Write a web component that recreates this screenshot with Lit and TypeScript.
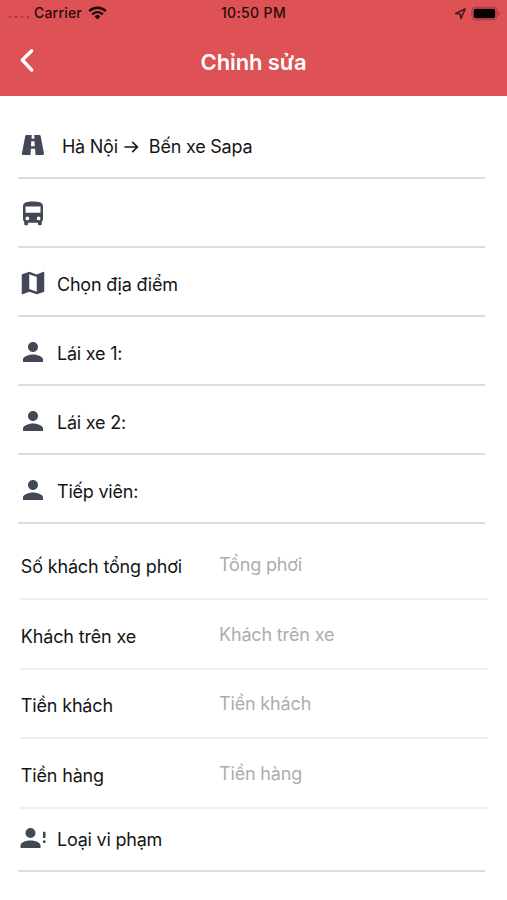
import { LitElement, html, css, svg } from "lit";
import { customElement } from "lit/decorators.js";

const icons: Record<string, unknown> = {
  road: svg`<path d="M18.1,4.8C18,4.3 17.6,4 17.1,4H13L13.2,7H10.8L11,4H6.8C6.3,4 5.9,4.4 5.8,4.8L3.1,18.8C3,19.4 3.5,20 4.1,20H10L10.3,15H13.7L14,20H19.8C20.4,20 20.9,19.4 20.8,18.8L18.1,4.8M10.4,13L10.6,9H13.2L13.4,13H10.4Z"/>`,
  bus: svg`<path d="M4 16c0 .88.39 1.67 1 2.22V20c0 .55.45 1 1 1h1c.55 0 1-.45 1-1v-1h8v1c0 .55.45 1 1 1h1c.55 0 1-.45 1-1v-1.78c.61-.55 1-1.34 1-2.22V6c0-3.5-3.58-4-8-4s-8 .5-8 4v10zm3.5 1c-.83 0-1.5-.67-1.5-1.5S6.67 14 7.5 14s1.5.67 1.5 1.5S8.33 17 7.5 17zm9 0c-.83 0-1.5-.67-1.5-1.5s.67-1.5 1.5-1.5 1.5.67 1.5 1.5-.67 1.5-1.5 1.5zm1.5-6H6V6h12v5z"/>`,
  map: svg`<path d="M20.5 3l-.16.03L15 5.1 9 3 3.36 4.9c-.21.07-.36.25-.36.48V20.5c0 .28.22.5.5.5l.16-.03L9 18.9l6 2.1 5.64-1.9c.21-.07.36-.25.36-.48V3.5c0-.28-.22-.5-.5-.5zM15 19l-6-2.11V5l6 2.11V19z"/>`,
  person: svg`<path d="M12 12c2.21 0 4-1.79 4-4s-1.79-4-4-4-4 1.79-4 4 1.79 4 4 4zm0 2c-2.67 0-8 1.34-8 4v2h16v-2c0-2.66-5.33-4-8-4z"/>`,
  alert: svg`<path d="M10,4A4,4 0 0,1 14,8A4,4 0 0,1 10,12A4,4 0 0,1 6,8A4,4 0 0,1 10,4M10,14C14.42,14 18,15.79 18,18V20H2V18C2,15.79 5.58,14 10,14M20,12V7H22V12H20M20,16V14H22V16H20Z"/>`,
};

@customElement("app-root")
export class AppRoot extends LitElement {
  static styles = css`
    :host { display: block; height: 900px; background: #fff; overflow: hidden;
      font-family: Inter, "Liberation Sans", sans-serif; color: #151515; }
    header { height: 96px; background: #de5154; display: flex; flex-direction: column; }
    .status { height: 26px; display: grid; grid-template-columns: 1fr auto 1fr; align-items: center;
      font-size: 14px; line-height: 18px; font-weight: 500; color: #2a0b0d; }
    .time { font-size: 14px; letter-spacing: 0.35px; margin-top: -1px; }
    .left { display: flex; align-items: center; padding-left: 8px; }
    .carrier { width: 49px; letter-spacing: 0.2px; margin-top: -1px; }
    .dots { width: 22px; height: 4px; margin: 7px 4px 0 0; fill: #a93c41; }
    .wifi { width: 19px; height: 14px; margin-left: 5px; }
    .right { display: flex; align-items: center; justify-content: flex-end; padding-right: 6px; gap: 4px; }
    .loc { width: 13px; height: 13px; }
    .battery { width: 30px; height: 15px; }
    .nav { height: 70px; display: grid; grid-template-columns: 60px 1fr 60px; align-items: center; }
    .back { width: 16px; height: 26px; margin: -2px 0 0 19px; }
    h1 { margin: 2px 0 0; text-align: center; color: #fff; font-size: 22px; line-height: 26px; font-weight: 600; letter-spacing: -0.1px; }
    .row { box-sizing: border-box; height: 69px; margin: 0 22px 0 18px; display: flex; align-items: center;
      border-bottom: 2px solid #dcdcdc; font-size: 18px; line-height: 24px; letter-spacing: -0.22px; padding-top: 6px; }
    .row.first { height: 83px; padding-top: 20px; }
    .row.last { height: 63px; padding-top: 1px; }
    .icon { width: 30px; height: 30px; fill: #434856; flex: none; margin: -3.4px 0 0 -0.3px; }
    .text { margin-left: 9.3px; white-space: pre; }
    .first .text { margin-left: 14.2px; display: flex; align-items: center; }
    .arrow { width: 15px; height: 14px; margin: 1px 10px 0 6px; }
    .field { box-sizing: border-box; height: 69.5px; margin: 0 19px 0 20px; display: grid; grid-template-columns: 199px 1fr;
      align-items: center; border-bottom: 2px solid #eeeeee; font-size: 18px; line-height: 24px; letter-spacing: -0.16px; padding-top: 6px; }
    .field.top { height: 76px; padding-top: 11px; }
    .label { padding-left: 0.8px; }
    .hint { color: #adadad; margin-top: -4px; }
  `;

  icon(name: string) {
    return html`<svg class="icon" viewBox="0 0 24 24">${icons[name]}</svg>`;
  }

  row(name: string, text: string, cls = "") {
    return html`<div class="row ${cls}">${this.icon(name)}<span class="text">${text}</span></div>`;
  }

  field(label: string, hint: string, cls = "") {
    return html`<div class="field ${cls}"><span class="label">${label}</span><span class="hint">${hint}</span></div>`;
  }

  render() {
    return html`
      <header>
        <div class="status">
          <div class="left">
            <svg class="dots" viewBox="0 0 22 4"><circle cx="2" cy="2" r="1.3"/><circle cx="8" cy="2" r="1.3"/><circle cx="14" cy="2" r="1.3"/><circle cx="20" cy="2" r="1.3"/></svg>
            <span class="carrier">Carrier</span>
            <svg class="wifi" viewBox="0 0 19 14" fill="none" stroke="#1c0506" stroke-width="2.4">
              <path d="M1.2 5.2a11.8 11.8 0 0 1 16.6 0M4.2 8.3a7.5 7.5 0 0 1 10.6 0"/>
              <path d="M9.5 13.4 6.6 10.5a4.1 4.1 0 0 1 5.8 0z" fill="#1c0506" stroke="none"/>
            </svg>
          </div>
          <span class="time">10:50 PM</span>
          <div class="right">
            <svg class="loc" viewBox="0 0 13 13" fill="none" stroke="#4a1518" stroke-width="1.5" stroke-linejoin="round"><path d="M11.2 2 1.6 6.5l4.6.5.8 4.4z"/></svg>
            <svg class="battery" viewBox="0 0 30 15"><rect x=".9" y="1.2" width="25" height="12.6" rx="3.6" fill="none" stroke="#a2383d"/><rect x="2.6" y="2.8" width="21.6" height="9.4" rx="2" fill="#080000"/><path d="M27.4 5.4v4.2c1.6-.7 1.6-3.5 0-4.2z" fill="#a2383d"/></svg>
          </div>
        </div>
        <div class="nav">
          <svg class="back" viewBox="0 0 16 26" fill="none" stroke="#fff" stroke-width="3.4" stroke-linecap="round" stroke-linejoin="round"><path d="M12.7 3.7 3.3 13l9.4 10"/></svg>
          <h1>Chỉnh sửa</h1>
        </div>
      </header>
      <div class="row first">${this.icon("road")}<span class="text"><span>Hà Nội</span><svg class="arrow" viewBox="0 0 15 14" fill="none" stroke="#151515" stroke-width="1.6" stroke-linecap="round" stroke-linejoin="round"><path d="M1 7h12.5M8.7 2.4 13.5 7l-4.8 4.6"/></svg><span>Bến xe Sapa</span></span></div>
      ${this.row("bus", "")}
      ${this.row("map", "Chọn địa điểm")}
      ${this.row("person", "Lái xe 1:")}
      ${this.row("person", "Lái xe 2:")}
      ${this.row("person", "Tiếp viên:")}
      ${this.field("Số khách tổng phơi", "Tổng phơi", "top")}
      ${this.field("Khách trên xe", "Khách trên xe")}
      ${this.field("Tiền khách", "Tiền khách")}
      ${this.field("Tiền hàng", "Tiền hàng")}
      ${this.row("alert", "Loại vi phạm", "last")}
    `;
  }
}
